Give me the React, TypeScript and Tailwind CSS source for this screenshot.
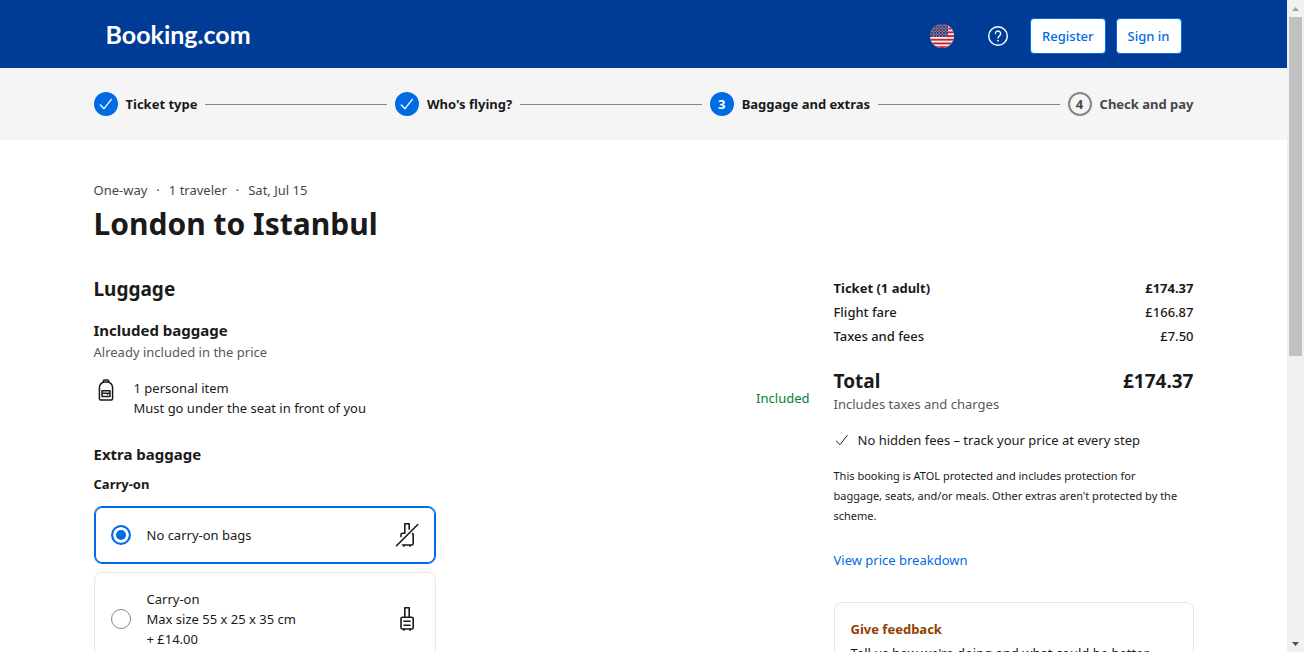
import { useState, type ReactNode } from "react";

function CheckMark({ className }: { className: string }) {
  return (
    <svg viewBox="0 0 24 24" fill="none" stroke="currentColor" strokeLinecap="round" strokeLinejoin="round" className={className} aria-hidden="true">
      <path d="M3.5 13.5 9 19 20 5" />
    </svg>
  );
}

function UsFlag() {
  return (
    <svg viewBox="0 0 24 24" className="size-6" aria-hidden="true">
      <defs>
        <clipPath id="flag-circle">
          <circle cx="12" cy="12" r="12" />
        </clipPath>
      </defs>
      <g clipPath="url(#flag-circle)">
        <rect width="24" height="24" fill="#f5f0f0" />
        {[0, 1, 2, 3, 4, 5, 6].map((i) => (
          <rect key={i} x="0" y={i * 3.7} width="24" height="1.85" fill="#c8202f" />
        ))}
        <rect width="18" height="13" fill="#45406f" />
        {[1.5, 4.5, 7.5, 10.5].map((y) =>
          [2, 5, 8, 11, 14, 17].map((x) => <circle key={`${x}-${y}`} cx={x} cy={y} r="0.6" fill="#c9c6dc" />),
        )}
        {[3, 6, 9, 12].map((y) =>
          [3.5, 6.5, 9.5, 12.5, 15.5].map((x) => <circle key={`${x}-${y}`} cx={x} cy={y} r="0.6" fill="#c9c6dc" />),
        )}
      </g>
    </svg>
  );
}

function HelpIcon() {
  return (
    <svg viewBox="0 0 24 24" fill="none" stroke="currentColor" strokeWidth="1.4" strokeLinecap="round" className="size-6" aria-hidden="true">
      <circle cx="12" cy="12" r="9.3" />
      <path d="M9.4 9.6a2.6 2.6 0 1 1 4.2 2.1c-.9.7-1.6 1.2-1.6 2.3" />
      <circle cx="12" cy="16.7" r="0.9" fill="currentColor" stroke="none" />
    </svg>
  );
}

function BackpackIcon() {
  return (
    <svg viewBox="0 0 24 24" fill="none" stroke="currentColor" strokeWidth="1.5" strokeLinejoin="round" strokeLinecap="round" className="size-6 shrink-0" aria-hidden="true">
      <path d="M5.4 9.6a5.6 5.6 0 0 1 5.6-5.6h2a5.6 5.6 0 0 1 5.6 5.6V20.5a1.5 1.5 0 0 1-1.5 1.5H6.9a1.5 1.5 0 0 1-1.5-1.5z" />
      <path d="M9.2 4.2V3.5A1.5 1.5 0 0 1 10.7 2h2.6a1.5 1.5 0 0 1 1.5 1.5v.7" />
      <path d="M8 12.8h8v5.6H8zM8 15.2h8M13.6 15.2v1" />
    </svg>
  );
}

function SuitcaseIcon() {
  return (
    <svg viewBox="0 0 24 24" fill="none" stroke="currentColor" strokeWidth="1.6" strokeLinejoin="round" strokeLinecap="round" className="size-6 shrink-0" aria-hidden="true">
      <path d="M9.8 10V.8h4.4V10" />
      <rect x="6" y="10.3" width="12.2" height="11.7" rx="1.5" />
      <path d="M9 14.3h6M9 18.2h6M9 22.2v1M15 22.2v1" />
    </svg>
  );
}

function NoSuitcaseIcon() {
  return (
    <svg viewBox="0 0 24 24" fill="none" stroke="currentColor" strokeWidth="1.6" strokeLinejoin="round" strokeLinecap="round" className="size-6 shrink-0" aria-hidden="true">
      <path d="M1.5 22.7 22.8 1.5" />
      <path d="M6 13.6v-1.8a1.5 1.5 0 0 1 1.5-1.5h2.3V.8h4.4v5.4" />
      <path d="M17.5 10.5q.7.5.7 1.3V20.5a1.5 1.5 0 0 1-1.5 1.5H7.5M9 22.2v1M15 22.2v1" />
    </svg>
  );
}

function Step({ label, state, number }: { label: string; state: "done" | "current" | "todo"; number: number }) {
  const badge =
    state === "todo"
      ? "border-2 border-[#868686] text-[#474747]"
      : "bg-[#006ce4] text-white";
  return (
    <li className="flex shrink-0 items-center gap-2">
      <span className={`flex size-6 items-center justify-center rounded-full text-[13px] leading-5 font-bold ${badge}`}>
        {state === "done" ? <CheckMark className="size-4 stroke-2" /> : number}
      </span>
      <span className={`text-[13px] leading-5 font-bold ${state === "todo" ? "text-[#474747]" : "text-[#1a1a1a]"}`}>{label}</span>
    </li>
  );
}

function Rail() {
  return <li aria-hidden="true" className="h-px flex-1 bg-[#868686]" />;
}

function BagOption({
  id,
  checked,
  onSelect,
  icon,
  children,
}: {
  id: string;
  checked: boolean;
  onSelect: () => void;
  icon: ReactNode;
  children: ReactNode;
}) {
  return (
    <label
      htmlFor={id}
      className={`flex items-center gap-4 rounded-lg border p-4 ${checked ? "border-[#006ce4] inset-ring inset-ring-[#006ce4]" : "border-[#e7e7e7]"}`}
    >
      <input
        id={id}
        type="radio"
        name="carry-on"
        checked={checked}
        onChange={onSelect}
        className="size-5 shrink-0 appearance-none rounded-full border border-[#868686] bg-white checked:border-2 checked:border-[#006ce4] checked:bg-[#006ce4] checked:inset-ring-3 checked:inset-ring-white"
      />
      <span className="flex-1">{children}</span>
      {icon}
    </label>
  );
}

function PriceRow({ label, amount, weight }: { label: string; amount: string; weight: string }) {
  return (
    <div className={`flex justify-between text-[13px] leading-5 ${weight}`}>
      <dt>{label}</dt>
      <dd>{amount}</dd>
    </div>
  );
}

export default function App() {
  const [bag, setBag] = useState("none");

  return (
    <div className="flex h-screen overflow-hidden bg-white font-['Noto_Sans',sans-serif] text-[13px] leading-5 text-[#1a1a1a]">
      <div className="min-w-0 flex-1 overflow-hidden">
        <header className="bg-[#003b95]">
          <div className="mx-auto flex max-w-[1100px] items-center px-3 py-4">
            <a href="#home" className="font-['Lato',sans-serif] text-[25px] leading-9 font-bold text-white">
              Booking.com
            </a>
            <nav className="-mb-1 ml-auto flex items-center">
              <button type="button" aria-label="Language" className="mr-8">
                <UsFlag />
              </button>
              <button type="button" aria-label="Help" className="mr-5 text-white">
                <HelpIcon />
              </button>
              <button type="button" className="mr-2.5 h-9 rounded-sm border border-[#006ce4] bg-white px-[11px] font-medium text-[#006ce4]">
                Register
              </button>
              <button type="button" className="h-9 rounded-sm border border-[#006ce4] bg-white px-[11px] font-medium text-[#006ce4]">
                Sign in
              </button>
            </nav>
          </div>
        </header>

        <div className="bg-[#f5f5f5] py-6">
          <ol className="mx-auto flex max-w-[1100px] items-center gap-2">
            <Step number={1} state="done" label="Ticket type" />
            <Rail />
            <Step number={2} state="done" label="Who's flying?" />
            <Rail />
            <Step number={3} state="current" label="Baggage and extras" />
            <Rail />
            <Step number={4} state="todo" label="Check and pay" />
          </ol>
        </div>

        <main className="mx-auto max-w-[1100px] pt-10">
          <p className="flex gap-[9px] text-[#474747]">
            <span>One-way</span>
            <span>·</span>
            <span>1 traveler</span>
            <span>·</span>
            <span>Sat, Jul 15</span>
          </p>
          <h1 className="mt-1 text-[30px] leading-10 font-bold">London to Istanbul</h1>

          <div className="mt-8 flex items-start gap-6">
            <section className="min-w-0 flex-1">
              <h2 className="text-[19px] leading-[26px] font-bold">Luggage</h2>

              <h3 className="mt-4 text-[15px] leading-6 font-bold">Included baggage</h3>
              <p className="text-[#595959]">Already included in the price</p>
              <div className="mt-4 flex gap-4">
                <BackpackIcon />
                <div className="flex-1">
                  <p>1 personal item</p>
                  <p>Must go under the seat in front of you</p>
                </div>
                <p className="self-center text-[#008234]">Included</p>
              </div>

              <h3 className="mt-6 text-[15px] leading-6 font-bold">Extra baggage</h3>
              <h4 className="mt-2 font-bold">Carry-on</h4>
              <div className="mt-3 flex max-w-[342px] flex-col gap-2">
                <BagOption id="bag-none" checked={bag === "none"} onSelect={() => setBag("none")} icon={<NoSuitcaseIcon />}>
                  No carry-on bags
                </BagOption>
                <BagOption id="bag-carry" checked={bag === "carry"} onSelect={() => setBag("carry")} icon={<SuitcaseIcon />}>
                  Carry-on
                  <br />
                  Max size 55 x 25 x 35 cm
                  <br />+ £14.00
                </BagOption>
              </div>
            </section>

            <aside className="w-[360px] shrink-0 pt-0.5">
              <dl className="flex flex-col gap-1">
                <PriceRow label="Ticket (1 adult)" amount="£174.37" weight="font-bold" />
                <PriceRow label="Flight fare" amount="£166.87" weight="font-medium" />
                <PriceRow label="Taxes and fees" amount="£7.50" weight="font-medium" />
              </dl>
              <div className="mt-[22px] flex justify-between text-[19px] leading-[26px] font-bold">
                <span>Total</span>
                <span>£174.37</span>
              </div>
              <p className="text-[#595959]">Includes taxes and charges</p>
              <p className="mt-4 flex items-center gap-2">
                <CheckMark className="size-4 stroke-[1.5]" />
                No hidden fees – track your price at every step
              </p>
              <p className="mt-4 text-[11px] leading-5">
                This booking is ATOL protected and includes protection for
                <br />
                baggage, seats, and/or meals. Other extras aren't protected by the
                <br />
                scheme.
              </p>
              <button type="button" className="mt-6 block text-[#006ce4]">
                View price breakdown
              </button>
              <div className="mt-8 rounded-lg border border-[#e7e7e7] p-4">
                <h3 className="font-bold text-[#923e01]">Give feedback</h3>
                <p className="mt-1">Tell us how we're doing and what could be better</p>
              </div>
            </aside>
          </div>
        </main>
      </div>

      <div aria-hidden="true" className="flex w-[17px] shrink-0 flex-col items-center bg-[#f1f1f1]">
        <svg viewBox="0 0 17 17" className="size-[17px] shrink-0">
          <path d="M5 11 8.5 7 12 11z" fill="#a3a3a3" />
        </svg>
        <div className="h-[339px] w-[13px] bg-[#c1c1c1]" />
        <svg viewBox="0 0 17 17" className="mt-auto size-[17px] shrink-0">
          <path d="M5 7 8.5 11 12 7z" fill="#505050" />
        </svg>
      </div>
    </div>
  );
}
